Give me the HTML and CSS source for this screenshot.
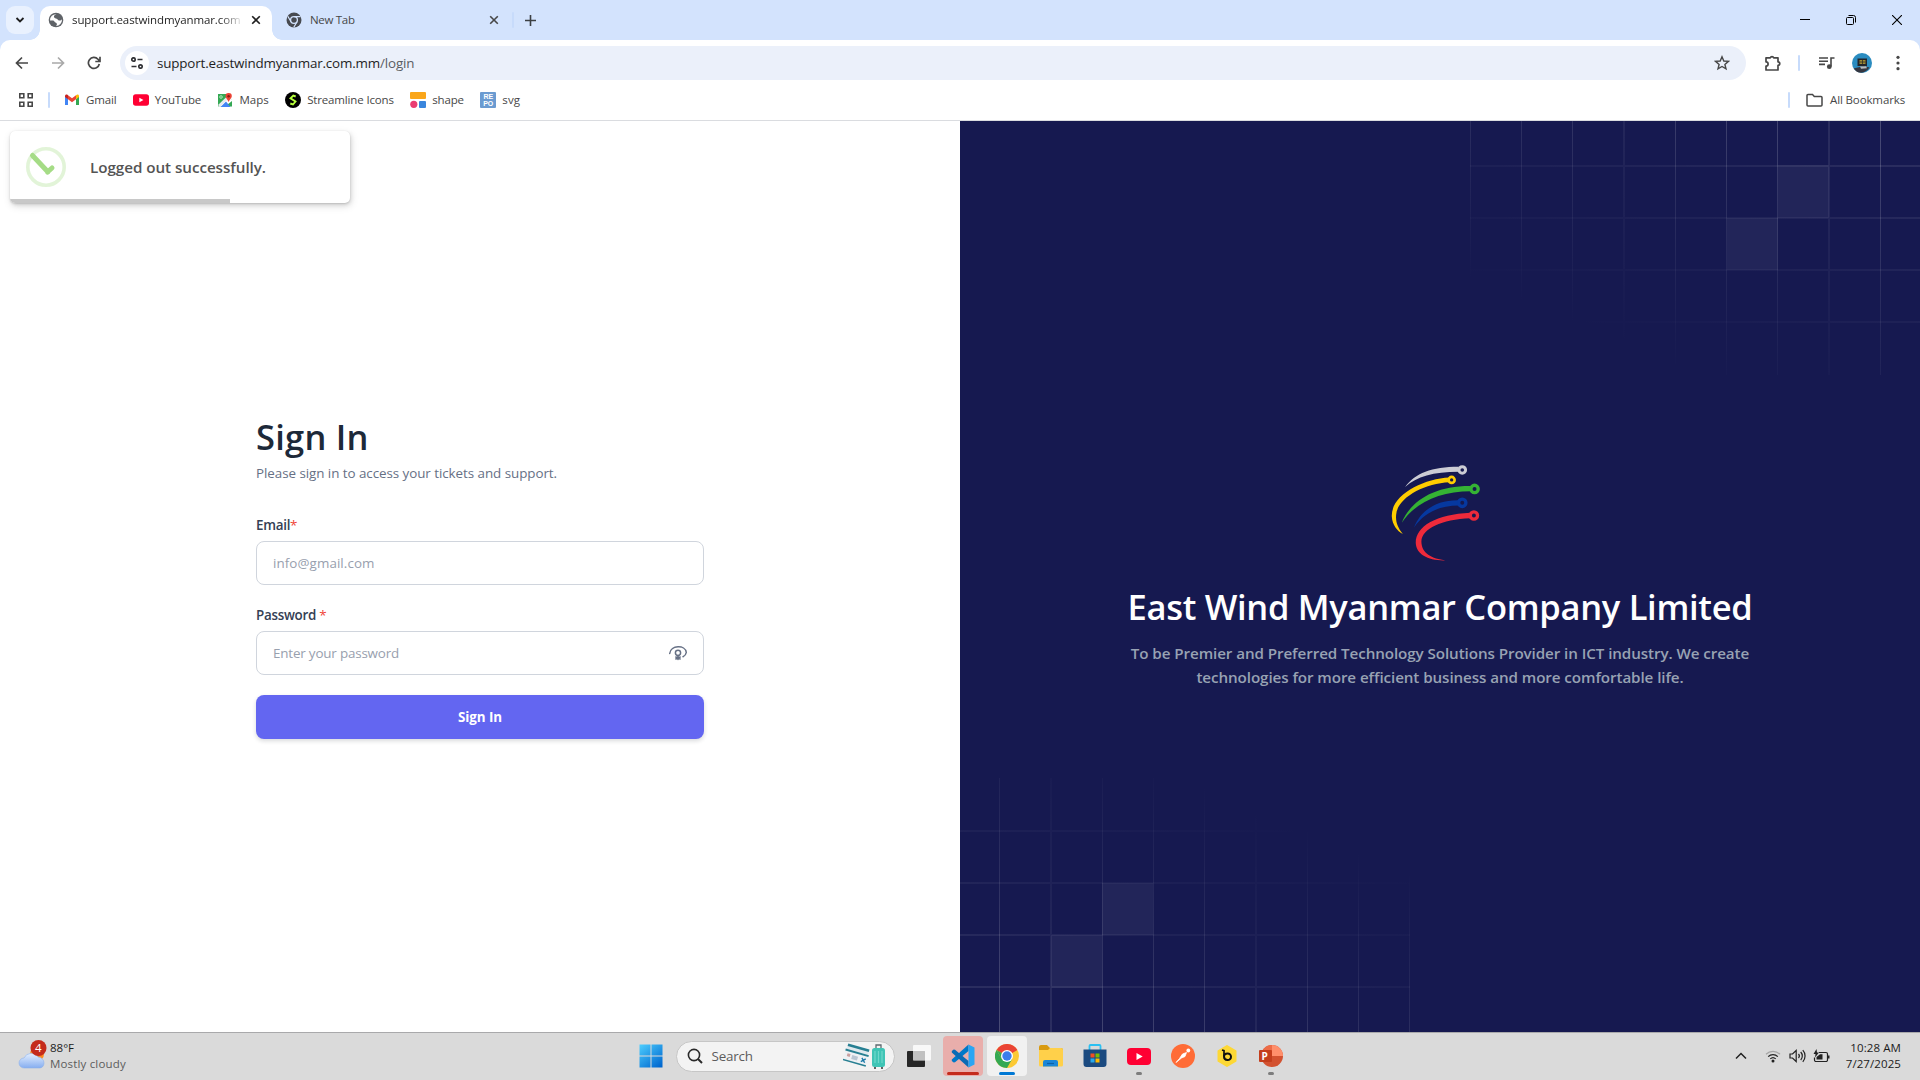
FILE: index.html
```html
<!DOCTYPE html>
<html lang="en">
<head>
<meta charset="utf-8">
<title>Sign In</title>
<link rel="stylesheet" href="styles.css">
</head>
<body>
<svg width="0" height="0" class="defs">
  <defs>
    <linearGradient id="fade" gradientUnits="userSpaceOnUse" x1="330" y1="-60" x2="200" y2="245"><stop offset="0" stop-color="#fff" stop-opacity=".24"/><stop offset=".5" stop-color="#fff" stop-opacity=".1"/><stop offset="1" stop-color="#fff" stop-opacity="0"/></linearGradient>
    <symbol id="grid" viewBox="0 0 450 254">
      <path d="M.5 0V254M51.5 0V254M102.5 0V254M205.5 0V254M256.5 0V254M307.5 0V254M410.5 0V254" fill="none" stroke="url(#fade)"/>
      <path d="M154 0V254M359 0V254M0 45H450M0 97H450M0 149H450M0 201H450" fill="none" stroke="url(#fade)" stroke-width="2" opacity=".45"/>
      <path d="M308 44h51v53h-51zM257 97h51v52h-51z" fill="#fff" fill-opacity=".055"/>
    </symbol>
    <symbol id="x" viewBox="0 0 10 10"><path d="M1.200 1.200L8.800 8.800M8.800 1.200L1.200 8.800" fill="none" stroke="currentColor" stroke-width="1.600"/></symbol>
    <symbol id="yt" viewBox="0 0 24 17"><rect width="24" height="17" rx="4" fill="#ff0033"/><path d="M9.500 5v7l6.200-3.500z" fill="#fff"/></symbol>
  </defs>
</svg>

<header class="tabs">
  <button class="tab-search"><svg width="10" height="10" viewBox="0 0 10 10"><path d="M1.500 3L5 6.500 8.500 3" fill="none" stroke="#1f1f1f" stroke-width="1.800"/></svg></button>
  <div class="tab active">
    <svg width="16" height="16" viewBox="0 0 16 16"><circle cx="8" cy="8" r="7.300" fill="#5f6368"/><path d="M8.500 2.200C5 3 5.500 6 8 6.500c2 .3 1.500 1.800 3.200 2 1.200.2 2-.6 2.800-1A6.200 6.200 0 0 1 8 14c1.500-1.500 1-3-.5-3.500C6 10 6.500 8.500 5 8.500H2A6 6 0 0 1 8.500 2.200z" fill="#fff"/></svg>
    <span class="tab-title"><span class="t">support.eastwindmyanmar.com</span></span>
    <svg class="close" width="10" height="10"><use href="#x"/></svg>
  </div>
  <div class="tab">
    <svg width="16" height="16" viewBox="0 0 16 16"><circle cx="8" cy="8" r="7.500" fill="#474a50"/><circle cx="8" cy="8" r="3.400" fill="#474a50" stroke="#d3e3fd" stroke-width="1.300"/><path d="M8 4.600h6.500M5 9.700L1.800 4.200M11 9.700L7.800 15.300" stroke="#d3e3fd" stroke-width="1.200"/></svg>
    <span class="tab-name t">New Tab</span>
    <svg class="close" width="10" height="10"><use href="#x"/></svg>
  </div>
  <i class="sep tab-sep"></i>
  <svg class="plus" width="11" height="11" viewBox="0 0 11 11"><path d="M5.500 0v11M0 5.500h11" stroke="#3c4043" stroke-width="1.600"/></svg>
  <div class="window-controls">
    <svg width="10" height="10" viewBox="0 0 10 10"><path d="M0 4.500h10" stroke="#000"/></svg>
    <svg width="10" height="10" viewBox="0 0 10 10"><path d="M.5 3.500a1 1 0 0 1 1-1h5a1 1 0 0 1 1 1v5a1 1 0 0 1-1 1h-5a1 1 0 0 1-1-1zM2.500 .5h5a2 2 0 0 1 2 2v5" fill="none" stroke="#000"/></svg>
    <svg width="10" height="10" viewBox="0 0 10 10"><path d="M0 0L10 10M10 0L0 10" stroke="#000" stroke-width="1.100"/></svg>
  </div>
</header>

<nav class="chrome">
  <div class="toolbar">
    <svg width="14" height="14" viewBox="0 0 14 14"><path d="M13 7H2M7 1.500L1.500 7 7 12.500" fill="none" stroke="#474747" stroke-width="1.700"/></svg>
    <svg width="14" height="14" viewBox="0 0 14 14"><path d="M1 7h11M7 1.500L12.500 7 7 12.500" fill="none" stroke="#a9a9a9" stroke-width="1.700"/></svg>
    <svg width="14" height="14" viewBox="0 0 14 14"><path d="M12.300 8A5.500 5.500 0 1 1 11 3.200L12.500 5M13 .8v4.700H8.300" fill="none" stroke="#474747" stroke-width="1.700"/></svg>
    <div class="omnibox">
      <span class="site-info"><svg width="14" height="12" viewBox="0 0 14 12"><g fill="none" stroke="#303134" stroke-width="1.700"><circle cx="3.500" cy="2.500" r="1.700"/><path d="M7.500 2.500H12.500M1.500 9.500H6.500"/><circle cx="10.500" cy="9.500" r="1.700"/></g></svg></span>
      <span class="url t">support.eastwindmyanmar.com.mm<b>/login</b></span>
      <svg class="star" width="16" height="16" viewBox="0 0 16 16"><path d="M8 1.800L9.800 6l4.600.4-3.500 3 1.100 4.500L8 11.500 4 13.900l1.100-4.500-3.500-3L6.200 6z" fill="none" stroke="#474747" stroke-width="1.400"/></svg>
    </div>
    <svg class="puzzle" width="18" height="18" viewBox="0 0 18 18"><path d="M3 3.800h3.300a1.800 1.800 0 0 1 3.400 0H14v4a1.700 1.700 0 0 1 0 3.500V16H2v-4a2 2 0 0 0 0-4.200V3.800z" fill="none" stroke="#474747" stroke-width="1.700" stroke-linejoin="round"/></svg>
    <i class="sep bar-sep"></i>
    <svg class="music" width="16" height="14" viewBox="0 0 16 14"><path d="M0 2h9M0 5.200h9M0 8.400h6M12 10.500V2h3.500" fill="none" stroke="#474747" stroke-width="1.600"/><circle cx="10.300" cy="10.700" r="2.400" fill="#474747"/></svg>
    <svg class="avatar" width="20" height="20" viewBox="0 0 20 20"><circle cx="10" cy="10" r="10" fill="#2b8cc0"/><path d="M5.500 5.500h9.500v7.500h-9.500z" fill="#23252b"/><path d="M7.500 7h6v4h-6z" fill="#a08b35"/><path d="M7.500 9h6M10.500 7v4" stroke="#222" stroke-width=".7"/><path d="M1.500 15.500L12 13l5.500 1.500a9.500 9.500 0 0 1-13 4z" fill="#343640"/><path d="M8 13.500l6-.3 1 2-6 .5z" fill="#b9bcc0"/></svg>
    <svg class="dots" width="4" height="16" viewBox="0 0 4 16"><g fill="#474747"><circle cx="2" cy="2.300" r="1.600"/><circle cx="2" cy="8" r="1.600"/><circle cx="2" cy="13.700" r="1.600"/></g></svg>
  </div>
  <div class="bookmarks">
    <svg width="16" height="16" viewBox="0 0 16 16"><path d="M1.800 1.800h4v4h-4zM10.200 1.800h4v4h-4zM1.800 10.200h4v4h-4zM10.200 10.200h4v4h-4z" fill="none" stroke="#474747" stroke-width="1.600"/></svg>
    <i class="sep apps-sep"></i>
    <a><svg width="16" height="16" viewBox="0 0 16 16"><path d="M1 4v9h3V7z" fill="#4285f4"/><path d="M12 7v6h3V4z" fill="#34a853"/><path d="M1 4.500V4c0-1.500 1.500-2 2.500-1.200L4 3.200V7.300L1 5z" fill="#c5221f"/><path d="M4 3.200L8 6.200l4-3v4L8 10.300 4 7.300z" fill="#ea4335"/><path d="M12 3.200c1.500-1.300 3-.6 3 .8v1l-3 2.300z" fill="#fbbc04"/></svg><span class="t">Gmail</span></a>
    <a><svg width="16" height="12"><use href="#yt"/></svg><span class="t">YouTube</span></a>
    <a><svg width="16" height="16" viewBox="0 0 16 16"><path d="M1 2h10l4 6v6.500H1z" fill="#34a853"/><path d="M1 14.500L13 3l2 5v1L8 14.500z" fill="#fff"/><path d="M3.500 15L9 9.500l4.500 5.500z" fill="#4285f4"/><path d="M1 13L11.500 3l1.500 2L3 15z" fill="#e8eaed"/><path d="M11.500 1a3.200 3.200 0 0 1 3.300 3.300c0 2-2 3-3.300 5.700-.8-2.700-3-3.700-3-5.700A3.100 3.100 0 0 1 11.500 1z" fill="#ea4335"/><circle cx="11.600" cy="4.200" r="1.200" fill="#8a1b14"/><circle cx="4" cy="5" r="1.300" fill="none" stroke="#c9f0d2" stroke-width=".8"/></svg><span class="t maps">Maps</span></a>
    <a><svg width="16" height="16" viewBox="0 0 16 16"><circle cx="8" cy="8" r="8" fill="#000"/><path d="M10.700 4.500L8.300 3.500 5.500 6.300 10.500 9.500 8 12.500 5.300 11.500" fill="none" stroke="#b6ff3c" stroke-width="1.900"/></svg><span class="t">Streamline Icons</span></a>
    <a><svg width="16" height="16" viewBox="0 0 16 16"><rect width="16" height="7" rx="1" fill="#faa61a"/><circle cx="3.800" cy="12.300" r="3.600" fill="#ea3d72"/><rect x="9" y="9" width="7" height="7" rx="1" fill="#3a86dd"/></svg><span class="t">shape</span></a>
    <a><span class="repo">RE<br>PO</span><span class="t svgs">svg</span></a>
    <i class="sep all-sep"></i>
    <svg width="17" height="14" viewBox="0 0 17 14"><path d="M1 2.500a1 1 0 0 1 1-1h4.500l1.800 2H15a1 1 0 0 1 1 1V12a1 1 0 0 1-1 1H2a1 1 0 0 1-1-1z" fill="none" stroke="#474747" stroke-width="1.500"/></svg>
    <span class="all t">All Bookmarks</span>
  </div>
</nav>

<main class="page">
  <section class="form-side">
    <form class="form">
      <h1>Sign In</h1>
      <p>Please sign in to access your tickets and support.</p>
      <label class="email">Email<em>*</em></label>
      <div class="field mail">info@gmail.com</div>
      <label>Password <em>*</em></label>
      <div class="field">Enter your password
        <svg width="20" height="16" viewBox="0 0 20 16"><g fill="none" stroke="#667085" stroke-width="1.500" stroke-linecap="round"><path d="M1.700 8.500C2.600 0 17.400-.5 18.300 7.500c-.3 1.800-1.600 3.400-3.300 4.200"/><circle cx="10" cy="7.800" r="2.600"/><path d="M10 10.500v4M7.800 12l4.400 2M12.200 12l-4.400 2"/></g></svg>
      </div>
      <button class="submit" type="button">Sign In</button>
    </form>
    <div class="toast">
      <svg width="40" height="40" viewBox="0 0 40 40"><circle cx="20" cy="20" r="18.200" fill="none" stroke="#a5dc86" stroke-opacity=".32" stroke-width="3.600"/><path d="M6.500 8.500L22 25M21.500 25L26 21" fill="none" stroke="#a5dc86" stroke-width="5" stroke-linecap="round"/></svg>
      <span class="t">Logged out successfully.</span>
      <i class="progress"></i>
    </div>
  </section>
  <section class="brand">
    <svg class="grid top" width="450" height="254"><use href="#grid"/></svg>
    <svg class="grid bottom" width="450" height="254"><use href="#grid"/></svg>
    <svg class="logo" width="100" height="103" viewBox="90 60 300 310">
      <path d="M135 141C165 100 215 80 296 80V95C220 95 170 109 135 141z" fill="#ccccd4"/><circle cx="307" cy="90" r="10" fill="none" stroke="#ccccd4" stroke-width="9"/>
      <path d="M268 113C190 117 92 165 95 230C96 255 111 273 128 283C112 262 106 245 108 225C111 175 190 131 268 127z" fill="#ffcd00"/><circle cx="275" cy="120" r="9" fill="none" stroke="#ffcd00" stroke-width="8"/>
      <path d="M125 249C150 185 220 137 333 138V154C240 154 165 188 125 249z" fill="#35b234"/><circle cx="344" cy="147" r="11" fill="none" stroke="#35b234" stroke-width="10"/>
      <path d="M162 263C180 215 225 180 296 181V197C235 197 190 221 162 263z" fill="#0638a0"/><circle cx="307" cy="189" r="11" fill="none" stroke="#0638a0" stroke-width="10"/>
      <path d="M331 219C230 224 167 258 167 310C169 345 205 364 258 362C215 357 184 340 184 305C186 265 245 239 331 235z" fill="#ee2a3b"/><circle cx="342" cy="227" r="11" fill="none" stroke="#ee2a3b" stroke-width="10"/>
    </svg>
    <h2>East Wind Myanmar Company Limited</h2>
    <p>To be Premier and Preferred Technology Solutions Provider in ICT industry. We create<br>technologies for more efficient business and more comfortable life.</p>
  </section>
</main>

<footer class="taskbar">
  <div class="weather">
    <svg width="30" height="32" viewBox="0 0 30 32"><defs><linearGradient id="cl" x2="0" y2="1"><stop offset="0" stop-color="#e4efff"/><stop offset="1" stop-color="#86aef0"/></linearGradient></defs><circle cx="19" cy="14" r="7" fill="#ff8a1f"/><path d="M6 28a5 5 0 0 1 0-10 8 8 0 0 1 14-1 6 6 0 0 1 6 6c0 3-2 5-4.500 5z" fill="url(#cl)" stroke="#8fb2ea" stroke-width=".6"/><circle cx="20.500" cy="8" r="8" fill="#c42b1c"/></svg>
    <b>4</b>
    <div>88°F<br><span class="soft">Mostly cloudy</span></div>
  </div>
  <div class="apps">
    <svg class="win" width="24" height="24" viewBox="0 0 24 24"><defs><linearGradient id="w" gradientUnits="userSpaceOnUse" x1="0" y1="0" x2="20" y2="24"><stop offset="0" stop-color="#4fd0ff"/><stop offset="1" stop-color="#0067cf"/></linearGradient></defs><path d="M.5.500h11v11h-11zM12.500.500h11v11h-11zM.5 12.500h11v11h-11zM12.500 12.500h11v11h-11z" fill="url(#w)"/></svg>
    <div class="search">
      <svg width="16" height="16" viewBox="0 0 16 16"><circle cx="7" cy="7" r="5.600" fill="none" stroke="#2a2a2a" stroke-width="1.600"/><path d="M11 11l4 4" stroke="#2a2a2a" stroke-width="1.900"/></svg>
      <span class="t">Search</span>
      <svg class="trip" width="44" height="26" viewBox="0 0 44 26"><g transform="rotate(16 13 10)"><path d="M3 4h22v6H3z" fill="#dfe9ee"/><path d="M3 3h22v2.500H3z" fill="#277f92"/><path d="M2 8.500h24V20H2z" fill="#eef1f4"/><path d="M2 8.500h24v2H2zM2 19h24v1.500H2z" fill="#277f92"/><path d="M5 12.500h3v3H5z" fill="#c99f9f"/><path d="M10 13h6v4h-6z" fill="#b9c6d3"/><path d="M20 13l4 4M24 13l-4 4" stroke="#1979a8" stroke-width="1.400"/></g><path d="M33 6V2h5v4" fill="none" stroke="#5d6b70" stroke-width="1.300"/><rect x="29" y="5" width="13" height="19" rx="2.500" fill="#3fc4b5"/><path d="M32 8v12M35.500 8v12M39 8v12" stroke="#6fd8cb" stroke-width="1.200"/><path d="M31 25h2M38 25h2" stroke="#333" stroke-width="1.500"/></svg>
    </div>
    <svg class="taskview" width="26" height="24" viewBox="0 0 26 24"><rect x="1" y="7" width="18" height="16" rx="1" fill="#262626"/><rect x="7" y="1" width="18" height="15.500" rx="1" fill="#fff" fill-opacity=".8"/><rect x="7" y="7" width="12" height="9.500" fill="#b5b5b5" fill-opacity=".6"/></svg>
    <span class="tile alert"><svg width="24" height="24" viewBox="0 0 24 24"><path d="M17.500.500V7L4 18.300l-1.300.2L.8 17v-1.500z" fill="#0078c8"/><path d="M.8 8.500v-1.500L2.700 5.500 4 5.700 17.500 17v6.500z" fill="#0a6bb5"/><path d="M17.500.500L23.500 3.500v17l-6 3z" fill="#2aa5f3"/></svg><i></i></span>
    <span class="tile current"><svg width="24" height="24" viewBox="0 0 24 24"><circle cx="12" cy="12" r="12" fill="#fcc934"/><path d="M12 12L1.600 6A12 12 0 0 1 22.400 6z" fill="#ea4335"/><path d="M1.600 6A12 12 0 0 0 12 24l5.200-9L6.800 15z" fill="#34a853"/><path d="M1.600 6L6.800 15 12 12z" fill="#34a853"/><circle cx="12" cy="12" r="6" fill="#fff"/><circle cx="12" cy="12" r="4.700" fill="#3b7ded"/></svg><i></i></span>
    <span class="tile"><svg width="24" height="22" viewBox="0 0 24 22"><path d="M0 2a2 2 0 0 1 2-2h6l3 3h11a2 2 0 0 1 2 2v3H0z" fill="#d99a10"/><path d="M0 5h9l2-2h11a2 2 0 0 1 2 2v15a1.500 1.500 0 0 1-1.500 1.500h-21A1.500 1.500 0 0 1 0 20z" fill="#ffd04a"/><path d="M4 21.500V17a2 2 0 0 1 2-2h11a2 2 0 0 1 2 2v4.500z" fill="#1a86d6"/><path d="M8 18.500h7" stroke="#0b61a8" stroke-width="1.200"/></svg></span>
    <span class="tile"><svg width="24" height="24" viewBox="0 0 24 24"><path d="M6.500 6V2a1 1 0 0 1 1-1h9a1 1 0 0 1 1 1v4" fill="none" stroke="#2cc0f2" stroke-width="1.800"/><path d="M.5 5.500h23V20a3 3 0 0 1-3 3h-17a3 3 0 0 1-3-3z" fill="#1b4a80"/><path d="M7.500 9.500h4v4h-4z" fill="#f25022"/><path d="M12.500 9.500h4v4h-4z" fill="#7fba00"/><path d="M7.500 14.500h4v4h-4z" fill="#28a8ea"/><path d="M12.500 14.500h4v4h-4z" fill="#ffb900"/></svg></span>
    <span class="tile run"><svg width="24" height="17"><use href="#yt"/></svg><i></i></span>
    <span class="tile"><svg width="24" height="24" viewBox="0 0 24 24"><circle cx="12" cy="12" r="12" fill="#ff6c37"/><circle cx="17.300" cy="6.500" r="1.900" fill="#fff"/><path d="M15.500 8.500L11.500 10 8.500 14.500 5 18.500l5.500-4.500 3.500-1.500z" fill="#fff" stroke="#fff" stroke-width=".8"/></svg></span>
    <span class="tile"><svg width="20" height="22" viewBox="0 0 20 22"><path d="M10 1l8.500 5v10L10 21l-8.500-5V6z" fill="#fdd835" stroke="#fdd835" stroke-width="2" stroke-linejoin="round"/><path d="M5 5L7 5.700V11" fill="none" stroke="#111" stroke-width="1.700"/><path d="M7 11.500C7 8 14 7 14 11.700S7 16 7 11.500z" fill="none" stroke="#111" stroke-width="2"/></svg></span>
    <span class="tile run"><svg width="24" height="24" viewBox="0 0 24 24"><circle cx="13" cy="12" r="11" fill="#d35230"/><path d="M13 1a11 11 0 0 1 11 11H13z" fill="#ff8f6b"/><path d="M13 1v11H2A11 11 0 0 1 13 1z" fill="#ed6c47"/><rect y="6" width="13" height="12" rx="1" fill="#c43e1c"/></svg><b>P</b><i></i></span>
  </div>
  <div class="tray">
    <svg class="chev" width="12" height="8" viewBox="0 0 12 8"><path d="M1 6.500L6 1.500l5 5" fill="none" stroke="#222" stroke-width="1.500"/></svg>
    <svg class="wifi" width="16" height="14" viewBox="0 0 16 14"><path d="M1 5.200a10 10 0 0 1 14 0" stroke="#a5a5a5" fill="none" stroke-width="1.200"/><path d="M3.200 7.600a6.900 6.900 0 0 1 9.600 0M5.300 9.900a3.900 3.900 0 0 1 5.400 0" fill="none" stroke="#222" stroke-width="1.300"/><circle cx="8" cy="12" r="1.500" fill="#222"/></svg>
    <svg class="vol" width="17" height="14" viewBox="0 0 17 14"><path d="M1 5h2.500L7.200 1.500v11L3.500 9H1zM9.500 5a3 3 0 0 1 0 4M11.700 3a5.800 5.800 0 0 1 0 8M13.800 1.200a8.600 8.600 0 0 1 0 11.600" fill="none" stroke="#222" stroke-width="1.200"/></svg>
    <svg class="bat" width="17" height="14" viewBox="0 0 17 14"><path d="M6 3.500h7a1.500 1.500 0 0 1 1.500 1.500v6a1.500 1.500 0 0 1-1.500 1.500H3A1.500 1.500 0 0 1 1.500 11V8.500" fill="none" stroke="#222" stroke-width="1.200"/><path d="M3.500 10.500V8L7 5.300h2.500v5.200zM15 6.500h1.500v3H15zM3.500 0L.5 5h2l-.5 3.500L6 3.500H4z" fill="#222"/></svg>
    <div class="clock">10:28 AM<br>7/27/2025</div>
  </div>
</footer>
</body>
</html>
```
FILE: styles.css
```css
* { box-sizing: border-box; margin: 0; padding: 0; }
body { width: 1920px; height: 1080px; overflow: hidden; display: flex; flex-direction: column; background: #fff; font: 11.5px/16px "Open Sans", "Noto Sans", sans-serif; color: #474747; position: relative; }
svg { display: block; flex: none; }
.defs { position: absolute; }
.t { white-space: nowrap; display: inline-block; }
button { border: 0; font: inherit; }
.sep { width: 2px; height: 16px; border-radius: 1px; background: #c7dbfb; flex: none; }

/* Tab strip */
.tabs { height: 40px; flex: none; background: #d3e3fd; display: flex; align-items: center; padding-left: 6px; }
.tab-search { width: 28px; height: 28px; border-radius: 9px; background: #e9f1fe; display: grid; place-items: center; margin-right: 6px; }
.tab { display: flex; align-items: center; width: 239px; height: 34px; margin-top: 6px; padding: 0 0 6px 14px; }
.tab.active { width: 232px; background: #fff; border-radius: 10px 10px 0 0; padding-left: 8px; color: #1f1f1f; position: relative; }
.tab.active::before, .tab.active::after { content: ""; position: absolute; bottom: 0; width: 10px; height: 10px; }
.tab.active::before { left: -10px; background: radial-gradient(circle at 0 0, transparent 9.5px, #fff 10px); }
.tab.active::after { right: -10px; background: radial-gradient(circle at 100% 0, transparent 9.5px, #fff 10px); }
.tab-title { width: 170px; margin-left: 8px; letter-spacing: -.105px; -webkit-mask-image: linear-gradient(90deg, #000 148px, transparent 172px); mask-image: linear-gradient(90deg, #000 148px, transparent 172px); }
.tab-name { margin-left: 8px; letter-spacing: -.3px; }
.close { margin-left: auto; margin-right: 11px; color: #1f1f1f; }
.tab:not(.active) .close { margin-right: 12px; color: #474747; }
.tab-sep { margin-left: 1px; }
.plus { margin-left: 11px; }
.window-controls { margin-left: auto; margin-right: 18px; display: flex; gap: 36px; }

/* Toolbar and bookmarks */
.chrome { height: 81px; flex: none; background: linear-gradient(#d3e3fd 12px, #fff 12px); border-bottom: 1px solid #dadce0; }
.toolbar { background: #fff; border-radius: 10px 10px 0 0; height: 46px; display: flex; align-items: center; padding-left: 15px; }
.toolbar > svg:nth-child(2) { margin-left: 22px; }
.toolbar > svg:nth-child(3) { margin-left: 22px; }
.omnibox { width: 1626px; height: 34px; margin-left: 19px; border-radius: 17px; background: #ebf0fa; display: flex; align-items: center; padding-left: 5px; }
.site-info { width: 24px; height: 24px; border-radius: 50%; background: #fff; display: grid; place-items: center; }
.url { margin-left: 8px; font-size: 13.4px; letter-spacing: -.158px; color: #1f1f1f; }
.url b { font-weight: 400; color: #5a5d62; }
.star { margin-left: auto; margin-right: 16px; }
.puzzle { margin-left: 18px; }
.bar-sep { margin-left: 16px; }
.music { margin-left: 19px; }
.avatar { margin-left: 17px; }
.dots { margin-left: 24px; }
.bookmarks { height: 28px; display: flex; align-items: center; padding-left: 18px; letter-spacing: -.15px; }
.bookmarks a { display: flex; align-items: center; gap: 6px; margin-right: 16.4px; }
.bookmarks .maps { letter-spacing: 0; }
.bookmarks .svgs { letter-spacing: .17px; }
.apps-sep { margin: 0 14px; }
.repo { width: 16px; height: 16px; background: #6b9bd1; color: #fff; font: 700 7px/7px "Liberation Sans", sans-serif; text-align: center; padding-top: 1px; border-radius: 1px; }
.all-sep { margin-left: auto; margin-right: 16px; }
.all { margin-left: 7px; margin-right: 15px; letter-spacing: -.126px; }

/* Sign-in form */
.page { flex: none; height: 911px; display: grid; grid-template-columns: 960px 960px; }
.form-side { position: relative; padding: 294px 256px 0; }
.form { display: flex; flex-direction: column; font-size: 13.4px; line-height: 20px; }
.form h1 { font-size: 34.5px; line-height: 44px; font-weight: 600; letter-spacing: .25px; color: #1d2939; }
.form p { margin-top: 4px; letter-spacing: -.054px; color: #667085; }
.form label { margin-top: 20px; color: #344054; font-weight: 600; letter-spacing: -.28px; }
.form label.email { margin-top: 32px; }
.form em { font-style: normal; font-weight: 400; color: #f04438; }
.field { height: 44px; margin-top: 6px; border: 1px solid #d0d5dd; border-radius: 8px; padding: 0 15px 0 16px; display: flex; align-items: center; justify-content: space-between; color: #98a0ae; letter-spacing: -.175px; }
.field.mail { letter-spacing: .08px; }
.submit { margin-top: 20px; height: 44px; border-radius: 8px; background: #6366f1; color: #fff; font-weight: 700; font-size: 13.4px; letter-spacing: -.07px; box-shadow: 0 2px 4px rgba(16,24,40,.16); }
.toast { position: absolute; left: 10px; top: 10px; width: 340px; height: 72px; border-radius: 5px; background: #fff; overflow: hidden; display: flex; align-items: center; padding-left: 16px; gap: 24px; color: #545454; font-size: 15.2px; font-weight: 600; letter-spacing: -.04px; box-shadow: 0 0 1px rgba(0,0,0,.08), 0 1px 2px rgba(0,0,0,.1), 1px 2px 4px rgba(0,0,0,.1), 1px 3px 8px rgba(0,0,0,.12); }
.progress { position: absolute; left: 0; bottom: 0; width: 220px; height: 4px; background: #c8c8c8; }

/* Brand panel */
.brand { background: #161950; position: relative; display: flex; flex-direction: column; align-items: center; padding-top: 339px; text-align: center; overflow: hidden; }
.grid { position: absolute; }
.grid.top { right: 0; top: 0; }
.grid.bottom { left: 0; bottom: 0; transform: rotate(180deg); }
.brand h2 { margin-top: 22px; font-size: 34.5px; line-height: 44px; font-weight: 600; letter-spacing: -.3px; color: #fff; white-space: nowrap; }
.brand p { margin-top: 12px; font-size: 15.2px; line-height: 24px; font-weight: 600; letter-spacing: -.085px; color: #98a2b3; white-space: nowrap; }

/* Taskbar */
.taskbar { flex: none; height: 48px; padding-bottom: 1px; background: #dadada; border-top: 1px solid #a9a9ab; display: grid; grid-template-columns: 638.5px 1fr 200px; align-items: center; color: #1c1c1c; }
.weather { display: flex; align-items: center; padding-left: 18px; position: relative; }
.weather div { margin-left: 2px; }
.weather > b { position: absolute; left: 35px; top: 0; font-weight: 400; color: #fff; }
.soft { color: #5c5c5c; letter-spacing: .17px; }
.apps { display: flex; align-items: center; }
.search { width: 219px; height: 31px; margin-left: 13px; border-radius: 16px; background: #f3f3f3; border: 1px solid #c6c6c6; display: flex; align-items: center; padding-left: 10px; font-size: 13.4px; color: #5c5c5c; letter-spacing: -.2px; }
.search .t { margin-left: 9px; }
.trip { margin-left: auto; margin-right: 7px; }
.taskview { margin: 0 11px 0 11px; }
.tile { width: 40px; height: 40px; margin-right: 4px; border-radius: 4px; display: grid; place-items: center; position: relative; }
.tile i { position: absolute; bottom: 1px; left: 17px; width: 6px; height: 3px; border-radius: 2px; background: #7d7d7d; }
.alert { background: #e9aeab; }
.tile.alert i { left: 4px; width: 32px; background: #c42b1c; }
.current { background: #f1f1f1; }
.tile.current i { left: 12px; width: 16px; background: #0078d4; }
.tile b { position: absolute; left: 11px; top: 12px; color: #fff; font-size: 10px; }
.tray { display: flex; align-items: center; padding-left: 15px; }
.wifi { margin-left: 18px; }
.vol { margin-left: 8px; }
.bat { margin-left: 7px; }
.clock { margin-left: auto; margin-right: 19px; text-align: right; letter-spacing: .09px; }
```
